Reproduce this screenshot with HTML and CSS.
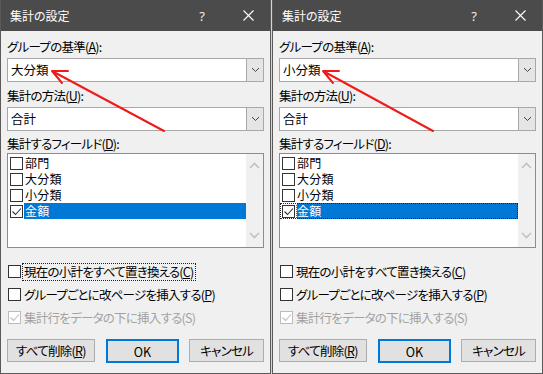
FILE: index.html
```html
<!DOCTYPE html>
<html lang="ja">
<head>
<meta charset="utf-8">
<link rel="stylesheet" href="styles.css">
</head>
<body>
<div class="screen">
  <div class="dialog">
    <div class="titlebar">
      <span class="title">集計の設定</span>
      <span class="tb-btn help">?</span>
      <span class="tb-btn close"><svg width="11" height="11" viewBox="0 0 11 11"><path d="M0.5 0.5 L10.5 10.5 M10.5 0.5 L0.5 10.5" stroke="#fff" stroke-width="1.1" fill="none"/></svg></span>
    </div>
    <div class="body">
      <div class="label lab1">グループの基準(<u>A</u>):</div>
      <div class="combo"><span class="val">大分類</span><span class="drop"><svg width="9" height="6" viewBox="0 0 9 6"><path d="M1 1 L4.5 4.5 L8 1" stroke="#444" stroke-width="1" fill="none"/></svg></span></div>
      <div class="label lab2">集計の方法(<u>U</u>):</div>
      <div class="combo"><span class="val">合計</span><span class="drop"><svg width="9" height="6" viewBox="0 0 9 6"><path d="M1 1 L4.5 4.5 L8 1" stroke="#444" stroke-width="1" fill="none"/></svg></span></div>
      <div class="label lab3">集計するフィールド(<u>D</u>):</div>
      <div class="list">
        <div class="items">
          <div class="item"><span class="cb"></span><span class="txt">部門</span></div>
          <div class="item"><span class="cb"></span><span class="txt">大分類</span></div>
          <div class="item"><span class="cb"></span><span class="txt">小分類</span></div>
          <div class="item sel"><span class="cb checked"><svg width="11" height="11" viewBox="0 0 11 11"><path d="M1.5 5.5 L4.5 8.5 L10 2.5" stroke="#333" stroke-width="1.1" fill="none"/></svg></span><span class="txt">金額</span></div>
        </div>
        <div class="scroll">
          <svg width="11" height="7" viewBox="0 0 11 7"><path d="M1 6 L5.5 1.5 L10 6" stroke="#c2c2c2" stroke-width="1.6" fill="none"/></svg>
          <svg width="11" height="7" viewBox="0 0 11 7"><path d="M1 1 L5.5 5.5 L10 1" stroke="#c2c2c2" stroke-width="1.6" fill="none"/></svg>
        </div>
      </div>
      <div class="opts">
        <div class="opt"><span class="cb"></span><span class="otxt focus">現在の小計をすべて置き換える(<u>C</u>)</span></div>
        <div class="opt"><span class="cb"></span><span class="otxt">グループごとに改ページを挿入する(<u>P</u>)</span></div>
        <div class="opt disabled"><span class="cb checked"><svg width="11" height="11" viewBox="0 0 11 11"><path d="M1.5 5.5 L4.5 8.5 L10 2.5" stroke="#bcbcbc" stroke-width="1.1" fill="none"/></svg></span><span class="otxt">集計行をデータの下に挿入する(S)</span></div>
      </div>
      <div class="buttons">
        <span class="btn wide">すべて削除(<u>R</u>)</span>
        <span class="btn def">OK</span>
        <span class="btn">キャンセル</span>
      </div>
    </div>
    <svg class="arrow" width="271" height="374" viewBox="0 0 271 374"><path d="M163 131 L51 71 M67 71 L51 71 L61 83" stroke="#ef1a1a" stroke-width="2" fill="none" stroke-linecap="round" stroke-linejoin="round"/></svg>
  </div>

  <div class="dialog">
    <div class="titlebar">
      <span class="title">集計の設定</span>
      <span class="tb-btn help">?</span>
      <span class="tb-btn close"><svg width="11" height="11" viewBox="0 0 11 11"><path d="M0.5 0.5 L10.5 10.5 M10.5 0.5 L0.5 10.5" stroke="#fff" stroke-width="1.1" fill="none"/></svg></span>
    </div>
    <div class="body">
      <div class="label lab1">グループの基準(<u>A</u>):</div>
      <div class="combo"><span class="val">小分類</span><span class="drop"><svg width="9" height="6" viewBox="0 0 9 6"><path d="M1 1 L4.5 4.5 L8 1" stroke="#444" stroke-width="1" fill="none"/></svg></span></div>
      <div class="label lab2">集計の方法(<u>U</u>):</div>
      <div class="combo"><span class="val">合計</span><span class="drop"><svg width="9" height="6" viewBox="0 0 9 6"><path d="M1 1 L4.5 4.5 L8 1" stroke="#444" stroke-width="1" fill="none"/></svg></span></div>
      <div class="label lab3">集計するフィールド(<u>D</u>):</div>
      <div class="list">
        <div class="items">
          <div class="item"><span class="cb"></span><span class="txt">部門</span></div>
          <div class="item"><span class="cb"></span><span class="txt">大分類</span></div>
          <div class="item"><span class="cb"></span><span class="txt">小分類</span></div>
          <div class="item sel focusrow"><span class="cb checked"><svg width="11" height="11" viewBox="0 0 11 11"><path d="M1.5 5.5 L4.5 8.5 L10 2.5" stroke="#333" stroke-width="1.1" fill="none"/></svg></span><span class="txt">金額</span></div>
        </div>
        <div class="scroll">
          <svg width="11" height="7" viewBox="0 0 11 7"><path d="M1 6 L5.5 1.5 L10 6" stroke="#c2c2c2" stroke-width="1.6" fill="none"/></svg>
          <svg width="11" height="7" viewBox="0 0 11 7"><path d="M1 1 L5.5 5.5 L10 1" stroke="#c2c2c2" stroke-width="1.6" fill="none"/></svg>
        </div>
      </div>
      <div class="opts">
        <div class="opt"><span class="cb"></span><span class="otxt">現在の小計をすべて置き換える(<u>C</u>)</span></div>
        <div class="opt"><span class="cb"></span><span class="otxt">グループごとに改ページを挿入する(<u>P</u>)</span></div>
        <div class="opt disabled"><span class="cb checked"><svg width="11" height="11" viewBox="0 0 11 11"><path d="M1.5 5.5 L4.5 8.5 L10 2.5" stroke="#bcbcbc" stroke-width="1.1" fill="none"/></svg></span><span class="otxt">集計行をデータの下に挿入する(S)</span></div>
      </div>
      <div class="buttons">
        <span class="btn wide">すべて削除(<u>R</u>)</span>
        <span class="btn def">OK</span>
        <span class="btn">キャンセル</span>
      </div>
    </div>
    <svg class="arrow" width="271" height="374" viewBox="0 0 271 374"><path d="M160 131 L50 71 M66 71 L50 71 L60 83" stroke="#ef1a1a" stroke-width="2" fill="none" stroke-linecap="round" stroke-linejoin="round"/></svg>
  </div>
</div>
</body>
</html>
```

FILE: styles.css
```css
* { box-sizing: border-box; }
html, body { margin: 0; padding: 0; }
body {
  width: 543px;
  height: 374px;
  overflow: hidden;
  background: #f0f0f0;
  font-family: "Noto Sans CJK JP", "Noto Sans", sans-serif;
  font-size: 12px;
  font-feature-settings: "palt";
  color: #000;
}
u { text-decoration: underline; text-underline-offset: 1px; text-decoration-thickness: 1px; }

.screen {
  display: flex;
  gap: 1px;
  height: 374px;
  background: #d6d6d6;
}
.dialog {
  position: relative;
  width: 271px;
  height: 374px;
  background: #f0f0f0;
  border: 1px solid #5a5a5a;
  border-top: none;
  display: flex;
  flex-direction: column;
}
.titlebar {
  height: 31px;
  background: #4b4b4b;
  color: #fff;
  display: flex;
  align-items: center;
  flex: none;
}
.title {
  flex: 1;
  padding-left: 9px;
  font-size: 12px;
  line-height: 16px;
}
.tb-btn {
  width: 46px;
  height: 31px;
  display: flex;
  align-items: center;
  justify-content: center;
}
.help { font-family: "Noto Sans", sans-serif; font-size: 13px; color: #eee; }
.close { width: 45px; padding-left: 1px; }

.body {
  padding: 8px 6px 0 6px;
  display: flex;
  flex-direction: column;
  font-size: 12.5px;
  letter-spacing: -0.75px;
}
.label { height: 16px; line-height: 16px; white-space: nowrap; }
.lab1 { margin-bottom: 3px; }
.lab2 { margin-top: 6px; margin-bottom: 3px; }
.lab3 { margin-top: 5px; margin-bottom: 1px; }

.combo {
  height: 24px;
  background: #fff;
  border: 1px solid #a8a8a8;
  display: flex;
  align-items: stretch;
}
.val { flex: 1; line-height: 22px; padding-left: 3px; letter-spacing: 0; }
.drop {
  width: 17px;
  background: #e5e5e5;
  border-left: 1px solid #a8a8a8;
  display: flex;
  align-items: center;
  justify-content: center;
}

.list {
  height: 95px;
  background: #fff;
  border: 1px solid #8c8c8c;
  display: flex;
}
.items { flex: 1; padding-top: 1px; }
.item {
  height: 16px;
  display: flex;
  align-items: center;
}
.cb {
  width: 13px;
  height: 13px;
  border: 1px solid #333;
  background: #fff;
  flex: none;
  display: flex;
  align-items: center;
  justify-content: center;
}
.item .cb { margin-left: 2px; }
.txt {
  flex: 1;
  height: 16px;
  line-height: 16px;
  margin-left: 1px;
  padding-left: 1px;
  font-size: 12px;
  letter-spacing: 0.2px;
}
.sel .txt { background: #0078d7; color: #fff; }
.focusrow { outline: 1px dotted #222; outline-offset: -1px; margin-left: 0; }
.focusrow .txt { outline: 1px dotted #fff; outline-offset: -1px; }
.scroll {
  width: 17px;
  background: #f0f0f0;
  display: flex;
  flex-direction: column;
  align-items: center;
  justify-content: space-between;
  padding: 8px 0 8px;
}

.opts { margin-top: 12px; display: flex; flex-direction: column; }
.opt {
  height: 23px;
  display: flex;
  align-items: center;
  white-space: nowrap;
}
.opt .cb { margin-left: 1px; }
.otxt {
  margin-left: 1px;
  padding: 0 2px;
  height: 18px;
  line-height: 18px;
}
.focus { outline: 1px dotted #222; outline-offset: -1px; }
.disabled .cb { border-color: #bcbcbc; }
.disabled .otxt { color: #a2a2a2; }

.buttons {
  margin-top: 10px;
  display: flex;
  gap: 11px;
}
.btn {
  width: 75px;
  height: 23px;
  background: #e1e1e1;
  border: 1px solid #adadad;
  display: flex;
  align-items: center;
  justify-content: center;
  white-space: nowrap;
}
.btn.wide { width: 88px; }
.btn.def { border: 2px solid #0078d7; width: 74px; height: 24px; margin-right: -1px; letter-spacing: 0; }

.arrow {
  position: absolute;
  left: 0;
  top: 0;
  pointer-events: none;
}
```
